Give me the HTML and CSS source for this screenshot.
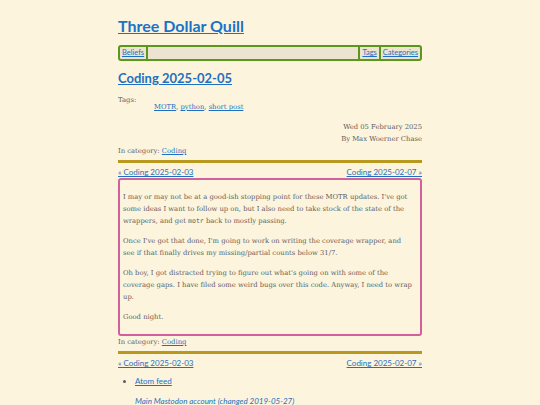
FILE: index.html
```html
<!DOCTYPE html>
<html lang="en">
<head>
<meta charset="utf-8">
<title>Coding 2025-02-05 - Three Dollar Quill</title>
<link rel="stylesheet" href="styles.css">
</head>
<body>
<div class="page">
  <header class="site-header">
    <h1 class="site-title"><a href="#">Three Dollar Quill</a></h1>
    <nav class="menu">
      <a class="menu-item first" href="#">Beliefs</a>
      <span class="menu-fill"></span>
      <a class="menu-item" href="#">Tags</a>
      <a class="menu-item" href="#">Categories</a>
    </nav>
  </header>
  <article class="post">
    <h2 class="post-title"><a href="#">Coding 2025-02-05</a></h2>
    <div class="tags">
      <span class="tags-label">Tags:</span>
      <ul class="tag-list"><li><a href="#">MOTR</a>, <a href="#">python</a>, <a href="#">short post</a></li></ul>
    </div>
    <div class="byline">
      <div>Wed 05 February 2025</div>
      <div>By Max Woerner Chase</div>
    </div>
    <div class="category">In category: <a href="#">Coding</a></div>
    <div class="pager">
      <a href="#">« Coding 2025-02-03</a>
      <a href="#">Coding 2025-02-07 »</a>
    </div>
    <div class="content">
      <p>I may or may not be at a good-ish stopping point for these MOTR updates. I've got some ideas I want to follow up on, but I also need to take stock of the state of the wrappers, and get <code>motr</code> back to mostly passing.</p>
      <p>Once I've got that done, I'm going to work on writing the coverage wrapper, and see if that finally drives my missing/partial counts below 31/7.</p>
      <p>Oh boy, I got distracted trying to figure out what's going on with some of the coverage gaps. I have filed some weird bugs over this code. Anyway, I need to wrap up.</p>
      <p>Good night.</p>
    </div>
    <div class="category">In category: <a href="#">Coding</a></div>
    <div class="pager">
      <a href="#">« Coding 2025-02-03</a>
      <a href="#">Coding 2025-02-07 »</a>
    </div>
  </article>
  <footer class="site-footer">
    <ul class="feeds"><li><a href="#">Atom feed</a></li></ul>
    <p class="social"><a href="#">Main Mastodon account (changed 2019-05-27)</a></p>
  </footer>
</div>
</body>
</html>
```
FILE: styles.css
```css
html, body {
  margin: 0;
  padding: 0;
  background: #fcf4dd;
}
body {
  font-family: "DejaVu Serif", serif;
  font-size: 6.8px;
  line-height: 12px;
  color: #5e5e5e;
}
a { color: #1f70c1; }
.page {
  width: 304px;
  margin: 0 auto;
  padding-top: 14px;
}
.site-title {
  margin: 0;
  font-family: Lato, sans-serif;
  font-weight: 700;
  font-size: 16px;
  line-height: 24px;
}
.site-title a { color: #1a73c8; }
.menu {
  display: flex;
  margin-top: 7px;
  border: 2px solid #5b961d;
  border-radius: 3px;
  background: #ece4d0;
  font-family: Lato, sans-serif;
  font-size: 7.5px;
  line-height: 12px;
}
.menu-item {
  padding: 0 2px;
  border-left: 2px solid #5b961d;
}
.menu-item.first {
  border-left: none;
  border-right: 2px solid #5b961d;
}
.menu-fill { flex: 1; }
.post-title {
  margin: 9px 0 0;
  font-family: Lato, sans-serif;
  font-weight: 700;
  font-size: 13px;
  line-height: 16px;
}
.tags {
  margin-top: 8px;
}
.tags-label { display: block; }
.tag-list {
  margin: -5px 0 0;
  padding-left: 36px;
  list-style: none;
}
.byline {
  margin-top: 8px;
  text-align: right;
}
.category {
  margin-top: 0;
}
.pager {
  display: flex;
  justify-content: space-between;
  border-top: 3px solid #b8991e;
  margin-top: 3px;
  padding-top: 3px;
  font-family: Lato, sans-serif;
  font-size: 8px;
}
.content {
  border: 2px solid #d1609d;
  border-radius: 3px;
  padding: 3px 6px 3px 3px;
}
.content p { margin: 8px 0; }
code {
  font-family: "DejaVu Sans Mono", monospace;
  font-size: 6.5px;
  line-height: 1;
}
.site-footer { margin-top: 6px; }
.feeds {
  margin: 0;
  padding-left: 17px;
  font-family: Lato, sans-serif;
  font-size: 8px;
}
.social {
  margin: 8px 0 0 17px;
  font-family: Lato, sans-serif;
  font-size: 8px;
  font-style: italic;
}
```
